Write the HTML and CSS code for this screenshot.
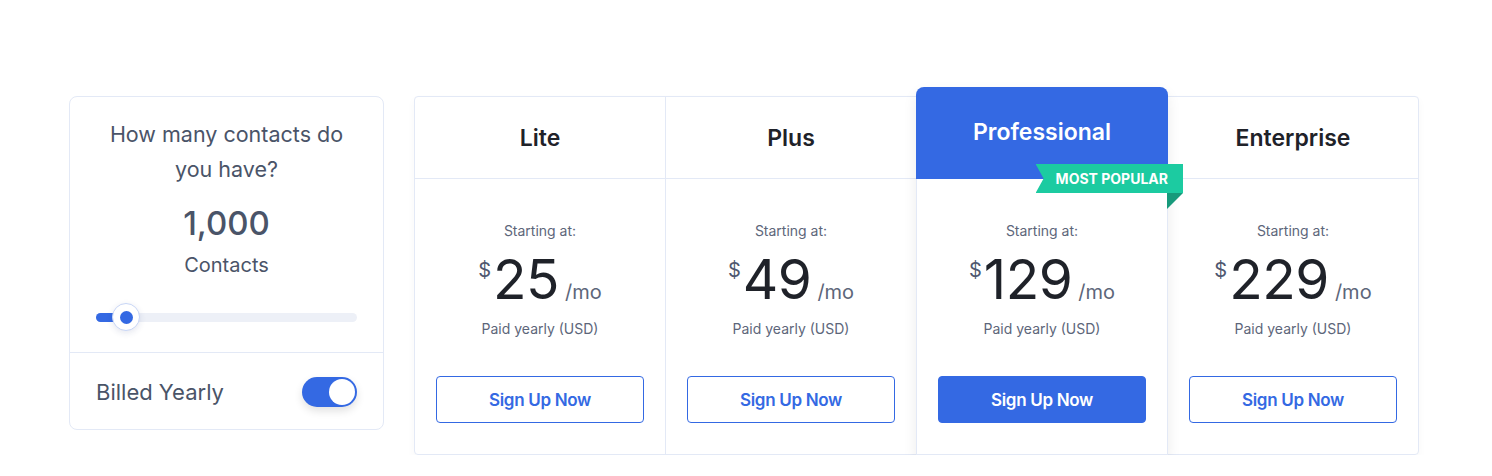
FILE: index.html
```html
<!DOCTYPE html>
<html lang="en">
<head>
<meta charset="utf-8">
<title>Pricing</title>
<link rel="stylesheet" href="styles.css">
</head>
<body>
<div class="page">
  <aside class="calc">
    <div class="calc-top">
      <p class="question">How many contacts do you have?</p>
      <div class="count">1,000</div>
      <div class="count-label">Contacts</div>
      <div class="slider">
        <div class="slider-fill"></div>
        <div class="slider-thumb"><span></span></div>
      </div>
    </div>
    <div class="calc-bottom">
      <span class="billed">Billed Yearly</span>
      <span class="toggle"><span class="knob"></span></span>
    </div>
  </aside>

  <section class="plans">
    <div class="plan">
      <div class="plan-head"><h2>Lite</h2></div>
      <div class="plan-body">
        <div class="start">Starting at:</div>
        <div class="price"><span class="cur">$</span><span class="amt">25</span><span class="per">/mo</span></div>
        <div class="paid">Paid yearly (USD)</div>
        <a class="btn">Sign Up Now</a>
      </div>
    </div>
    <div class="plan">
      <div class="plan-head"><h2>Plus</h2></div>
      <div class="plan-body">
        <div class="start">Starting at:</div>
        <div class="price"><span class="cur">$</span><span class="amt">49</span><span class="per">/mo</span></div>
        <div class="paid">Paid yearly (USD)</div>
        <a class="btn">Sign Up Now</a>
      </div>
    </div>
    <div class="plan plan-pro">
      <div class="plan-head"><h2>Professional</h2>
        <div class="ribbon">MOST POPULAR</div>
      </div>
      <div class="plan-body">
        <div class="start">Starting at:</div>
        <div class="price"><span class="cur">$</span><span class="amt">129</span><span class="per">/mo</span></div>
        <div class="paid">Paid yearly (USD)</div>
        <a class="btn btn-solid">Sign Up Now</a>
      </div>
    </div>
    <div class="plan">
      <div class="plan-head"><h2>Enterprise</h2></div>
      <div class="plan-body">
        <div class="start">Starting at:</div>
        <div class="price"><span class="cur">$</span><span class="amt">229</span><span class="per">/mo</span></div>
        <div class="paid">Paid yearly (USD)</div>
        <a class="btn">Sign Up Now</a>
      </div>
    </div>
  </section>
</div>
</body>
</html>
```

FILE: styles.css
```css
* { box-sizing: border-box; }
html, body { margin: 0; padding: 0; background: #fff; }
body {
  font-family: Inter, "Noto Sans", "Liberation Sans", sans-serif;
  color: #4a5468;
}
.page {
  display: flex;
  align-items: flex-start;
  padding: 96px 0 0 69px;
  gap: 30px;
}

/* left calculator card */
.calc {
  width: 315px;
  border: 1px solid #e3e9f6;
  border-radius: 8px;
  background: #fff;
}
.calc-top {
  padding: 20px 26px 30px;
  text-align: center;
  border-bottom: 1px solid #e3e9f6;
}
.question {
  margin: 0 auto;
  width: 260px;
  font-size: 21.5px;
  line-height: 35px;
  color: #4a5468;
}
.count {
  margin-top: 16px;
  font-size: 33px;
  line-height: 40px;
  font-weight: 500;
  color: #4a5468;
}
.count-label {
  margin-top: 10px;
  font-size: 20px;
  line-height: 24px;
  color: #4a5468;
}
.slider {
  position: relative;
  margin-top: 36px;
  height: 9px;
  border-radius: 5px;
  background: #edf0f7;
}
.slider-fill {
  width: 30px;
  height: 9px;
  border-radius: 5px;
  background: #3469e3;
}
.slider-thumb {
  position: absolute;
  left: 16px;
  top: -10px;
  width: 28px;
  height: 28px;
  border-radius: 50%;
  background: #fff;
  border: 1px solid #c8d6f6;
  box-shadow: 0 2px 6px rgba(40, 60, 120, 0.12);
  display: flex;
  align-items: center;
  justify-content: center;
}
.slider-thumb span {
  width: 13px;
  height: 13px;
  border-radius: 50%;
  background: #3469e3;
}
.calc-bottom {
  display: flex;
  align-items: center;
  justify-content: space-between;
  padding: 24px 26px 22px;
}
.billed {
  font-size: 22px;
  line-height: 30px;
  color: #4a5468;
}
.toggle {
  width: 55px;
  height: 30px;
  border-radius: 15px;
  background: #3469e3;
  display: flex;
  align-items: center;
  justify-content: flex-end;
  padding: 2px;
  box-shadow: 0 4px 8px rgba(0, 0, 0, 0.12);
}
.knob {
  width: 26px;
  height: 26px;
  border-radius: 50%;
  background: #fff;
}

/* pricing table */
.plans {
  display: flex;
  width: 1005px;
  border: 1px solid #e3e9f6;
  border-radius: 4px;
  background: #fff;
  box-shadow: 0 4px 10px rgba(0, 0, 0, 0.03);
}
.plan {
  flex: 1 1 0;
  display: flex;
  flex-direction: column;
  text-align: center;
  border-left: 1px solid #e3e9f6;
}
.plan:first-child { border-left: 0; }
.plan-head {
  position: relative;
  height: 82px;
  display: flex;
  align-items: center;
  justify-content: center;
  border-bottom: 1px solid #e3e9f6;
}
.plan-head h2 {
  margin: 0;
  font-size: 23px;
  font-weight: 600;
  color: #1f2229;
}
.plan-body {
  padding: 43px 21px 31px;
  display: flex;
  flex-direction: column;
  align-items: center;
}
.start {
  font-size: 14px;
  line-height: 18px;
  color: #5d667a;
}
.price {
  display: flex;
  align-items: baseline;
  justify-content: center;
  margin-top: 8px;
  height: 62px;
  color: #1f2229;
}
.cur {
  align-self: flex-start;
  margin-top: 10px;
  font-size: 20px;
  color: #4f5870;
  margin-right: 2px;
}
.amt {
  font-size: 55px;
  line-height: 62px;
  letter-spacing: -0.5px;
}
.per {
  margin-left: 6px;
  font-size: 20px;
  color: #5d667a;
}
.paid {
  margin-top: 10px;
  font-size: 14px;
  line-height: 18px;
  color: #5d667a;
}
.btn {
  margin-top: 38px;
  width: 100%;
  height: 47px;
  display: flex;
  align-items: center;
  justify-content: center;
  border: 1px solid #3469e3;
  border-radius: 4px;
  color: #3469e3;
  font-size: 17px;
  font-weight: 600;
  letter-spacing: -0.3px;
}
.btn-solid {
  background: #3469e3;
  color: #fff;
}

.plan-pro {
  margin-top: -10px;
  margin-bottom: -1px;
  position: relative;
  z-index: 1;
  background: #fff;
  border-radius: 8px 8px 0 0;
  border: 1px solid #e3e9f6;
  border-top: 0;
  box-shadow: 0 6px 14px rgba(0, 0, 0, 0.08);
}
.plan-pro + .plan { border-left: 0; }
.plan-pro .plan-head {
  height: 92px;
  padding-bottom: 2px;
  background: #3469e3;
  border-radius: 8px 8px 0 0;
  border-bottom: 0;
  margin: 0 -1px;
}
.plan-pro .plan-head h2 { color: #fff; }
.plan-pro .plan-body { padding-top: 43px; }

.ribbon {
  position: absolute;
  right: -15px;
  top: 77px;
  height: 29px;
  padding: 0 15px 0 20px;
  display: flex;
  align-items: center;
  background: #1ccba1;
  color: #fff;
  font-size: 14px;
  font-weight: 700;
  clip-path: polygon(0 0, 100% 0, 100% 100%, 0 100%, 8px 50%);
}
.plan-pro .plan-head::after {
  content: "";
  position: absolute;
  right: -15px;
  top: 106px;
  width: 0;
  height: 0;
  border-top: 16px solid #179a7b;
  border-right: 16px solid transparent;
}
```
